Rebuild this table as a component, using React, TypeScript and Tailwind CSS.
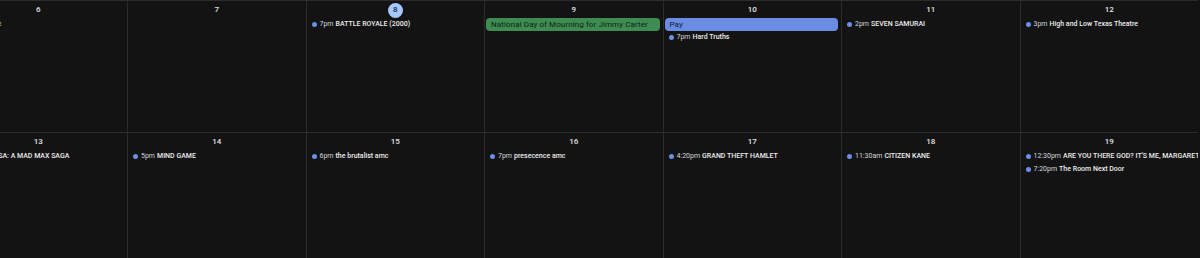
import React from "react";

type Ev =
  | { kind: "dot"; time: string; title: string }
  | { kind: "bar"; title: string; color: string; text: string };

type Cell = { day: string; today?: boolean; events: Ev[] };

const row1: Cell[] = [
  { day: "6", events: [{ kind: "dot", time: "7pm", title: "Heretic" }] },
  { day: "7", events: [] },
  { day: "8", today: true, events: [{ kind: "dot", time: "7pm", title: "BATTLE ROYALE (2000)" }] },
  {
    day: "9",
    events: [{ kind: "bar", title: "National Day of Mourning for Jimmy Carter", color: "#3e8c52", text: "#0f2415" }],
  },
  {
    day: "10",
    events: [
      { kind: "bar", title: "Pay", color: "#6a8de3", text: "#0e1b3d" },
      { kind: "dot", time: "7pm", title: "Hard Truths" },
    ],
  },
  { day: "11", events: [{ kind: "dot", time: "2pm", title: "SEVEN SAMURAI" }] },
  { day: "12", events: [{ kind: "dot", time: "3pm", title: "High and Low Texas Theatre" }] },
];

const row2: Cell[] = [
  { day: "13", events: [{ kind: "dot", time: "1pm", title: "FURIOSA: A MAD MAX SAGA" }] },
  { day: "14", events: [{ kind: "dot", time: "5pm", title: "MIND GAME" }] },
  { day: "15", events: [{ kind: "dot", time: "6pm", title: "the brutalist amc" }] },
  { day: "16", events: [{ kind: "dot", time: "7pm", title: "presecence amc" }] },
  { day: "17", events: [{ kind: "dot", time: "4:20pm", title: "GRAND THEFT HAMLET" }] },
  { day: "18", events: [{ kind: "dot", time: "11:30am", title: "CITIZEN KANE" }] },
  {
    day: "19",
    events: [
      { kind: "dot", time: "12:30pm", title: "ARE YOU THERE GOD? IT'S ME, MARGARET." },
      { kind: "dot", time: "7:20pm", title: "The Room Next Door" },
    ],
  },
];

function EventRow({ ev }: { ev: Ev }) {
  if (ev.kind === "bar") {
    return (
      <div
        className="h-[13px] ml-px mr-[3px] rounded-[4px] flex items-center pl-[5px] text-[8px] tracking-[0.1px] leading-none whitespace-nowrap overflow-hidden"
        style={{ backgroundColor: ev.color, color: ev.text }}
      >
        {ev.title}
      </div>
    );
  }
  return (
    <div className="h-[13px] flex items-center pl-[5px] text-[7px] leading-none whitespace-nowrap overflow-hidden text-[#e3e3e3]">
      <span className="w-[5px] h-[5px] rounded-full bg-[#6b8fe6] shrink-0 mr-[3px]" />
      <span className="text-[#d6d6d6]">{ev.time}</span>
      <span className="ml-[2px] font-medium text-[#ececec]">{ev.title}</span>
    </div>
  );
}

function DayCell({ cell }: { cell: Cell }) {
  return (
    <div className="border-l border-t border-[#2c2c2c] h-[132px] overflow-hidden flex flex-col">
      <div className="h-[16px] flex items-center justify-center mt-px">
        {cell.today ? (
          <span className="w-[15px] h-[15px] rounded-full bg-[#a8c7fa] text-[#0b2a5c] text-[8px] font-medium flex items-center justify-center leading-none">
            {cell.day}
          </span>
        ) : (
          <span className="text-[8px] font-medium text-[#e3e3e3] leading-none">{cell.day}</span>
        )}
      </div>
      <div className="flex flex-col">
        {cell.events.map((ev, i) => (
          <EventRow key={i} ev={ev} />
        ))}
      </div>
    </div>
  );
}

export default function App() {
  return (
    <div
      className="w-[1200px] h-[258px] overflow-hidden bg-[#131313]"
      style={{ fontFamily: "Roboto, 'Noto Sans', Arial, sans-serif" }}
    >
      <div className="ml-[-51.5px] w-[1249.5px] grid grid-cols-7">
        {row1.map((c) => (
          <DayCell key={c.day} cell={c} />
        ))}
        {row2.map((c) => (
          <DayCell key={c.day} cell={c} />
        ))}
      </div>
    </div>
  );
}
